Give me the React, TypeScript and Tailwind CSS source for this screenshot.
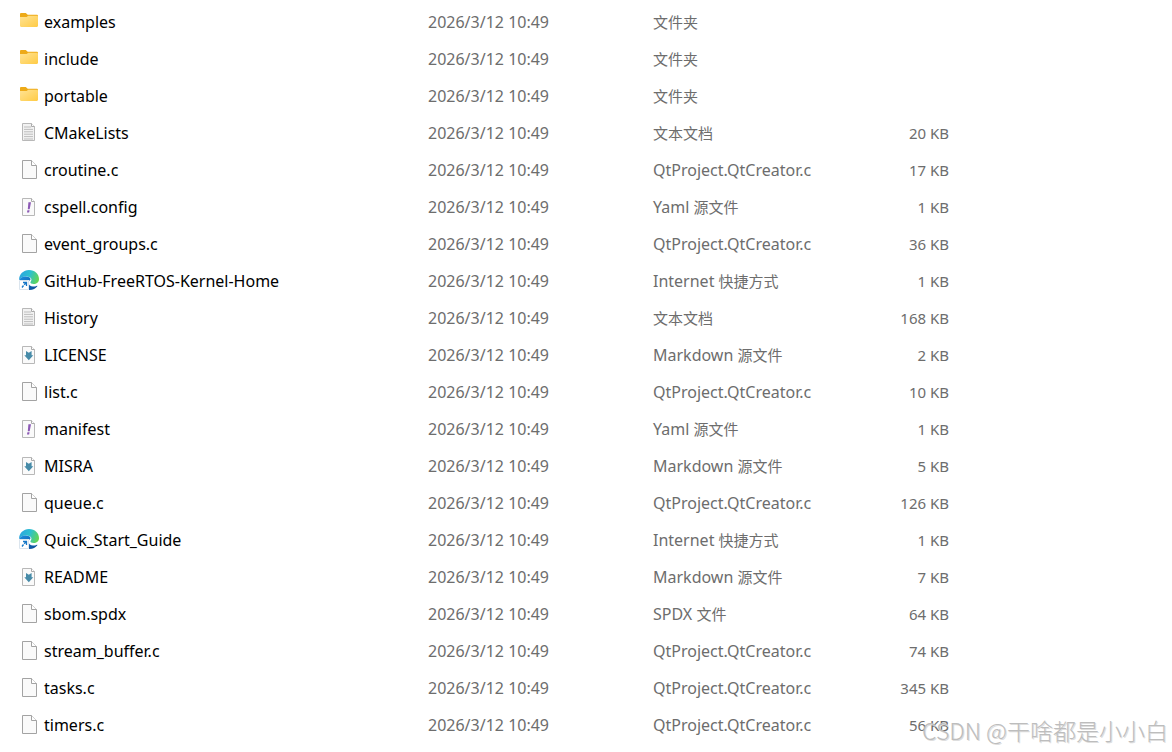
import React from 'react'

export default function App() {
  return (
    <main className="relative min-h-screen overflow-x-hidden bg-white pt-[3px] font-['Noto_Sans','Noto_Sans_CJK_SC',sans-serif]">
      <FileTable files={files} />
      <Watermark />
    </main>
  )
}

type FileKind = 'folder' | 'text' | 'c' | 'yaml' | 'link' | 'markdown' | 'spdx'

type FileItem = {
  name: string
  kind: FileKind
  size?: string
}

const MODIFIED = '2026/3/12 10:49'

const kindLabels: Record<FileKind, string[]> = {
  folder: ['', '文件夹'],
  text: ['', '文本文档'],
  c: ['QtProject.QtCreator.c'],
  yaml: ['Yaml', '源文件'],
  link: ['Internet', '快捷方式'],
  markdown: ['Markdown', '源文件'],
  spdx: ['SPDX', '文件'],
}

const files: FileItem[] = [
  { name: 'examples', kind: 'folder' },
  { name: 'include', kind: 'folder' },
  { name: 'portable', kind: 'folder' },
  { name: 'CMakeLists', kind: 'text', size: '20 KB' },
  { name: 'croutine.c', kind: 'c', size: '17 KB' },
  { name: 'cspell.config', kind: 'yaml', size: '1 KB' },
  { name: 'event_groups.c', kind: 'c', size: '36 KB' },
  { name: 'GitHub-FreeRTOS-Kernel-Home', kind: 'link', size: '1 KB' },
  { name: 'History', kind: 'text', size: '168 KB' },
  { name: 'LICENSE', kind: 'markdown', size: '2 KB' },
  { name: 'list.c', kind: 'c', size: '10 KB' },
  { name: 'manifest', kind: 'yaml', size: '1 KB' },
  { name: 'MISRA', kind: 'markdown', size: '5 KB' },
  { name: 'queue.c', kind: 'c', size: '126 KB' },
  { name: 'Quick_Start_Guide', kind: 'link', size: '1 KB' },
  { name: 'README', kind: 'markdown', size: '7 KB' },
  { name: 'sbom.spdx', kind: 'spdx', size: '64 KB' },
  { name: 'stream_buffer.c', kind: 'c', size: '74 KB' },
  { name: 'tasks.c', kind: 'c', size: '345 KB' },
  { name: 'timers.c', kind: 'c', size: '56 KB' },
]

function FileTable({ files }: { files: FileItem[] }) {
  return (
    <table className="w-full table-fixed border-collapse text-base leading-5 whitespace-nowrap text-[#6d6d6d]">
      <colgroup>
        <col className="w-[428px]" />
        <col className="w-[225px]" />
        <col className="w-[200px]" />
        <col className="w-24" />
        <col />
      </colgroup>
      <tbody>
        {files.map((file) => (
          <tr key={file.name} className="h-[37px]">
            <td className="p-0 pl-[19px] text-black">
              <div className="flex items-center gap-[5px]">
                <FileIcon kind={file.kind} />
                <span>{file.name}</span>
              </div>
            </td>
            <td className="p-0">{MODIFIED}</td>
            <td className="p-0">
              <KindLabel kind={file.kind} />
            </td>
            <td className="p-0 text-right text-[15px]">{file.size}</td>
            <td className="p-0" />
          </tr>
        ))}
      </tbody>
    </table>
  )
}

function KindLabel({ kind }: { kind: FileKind }) {
  const [latin, chinese] = kindLabels[kind]
  return (
    <>
      {latin}
      {latin && chinese && ' '}
      {chinese && (
        <span lang="zh-CN" className="text-[15px]">
          {chinese}
        </span>
      )}
    </>
  )
}

function FileIcon({ kind }: { kind: FileKind }) {
  return (
    <svg
      viewBox="0 0 20 20"
      className="mb-0.5 size-5 shrink-0"
      aria-hidden="true"
    >
      {kind === 'folder' && <FolderShape />}
      {kind === 'link' && <EdgeShape />}
      {(kind === 'c' || kind === 'spdx') && (
        <g stroke="#a3a3a3" strokeLinejoin="round">
          <path d="M3.5 1.5h9l5 5v13h-14z" fill="#fafafa" />
          <path d="M12.5 1.5v5h5" fill="#fff" />
        </g>
      )}
      {kind === 'text' && (
        <>
          <path d="M3.5 1.5h9l3 3v14h-12z" fill="#f2f2f2" stroke="#b8b8b8" />
          <path
            d="M5 5h7M5 7.4h9M5 9.8h9M5 12.2h9M5 14.6h9M5 17h9"
            stroke="#bdbdbd"
          />
          <path d="M12.5 1.5v3h3" fill="#fff" stroke="#ababab" />
        </>
      )}
      {(kind === 'yaml' || kind === 'markdown') && (
        <>
          <path d="M3.5 2.5h9l3 3v14h-12z" fill="#fafafa" stroke="#b8b8b8" />
          <path d="M12.5 2.5v3h3" fill="#fff" stroke="#ababab" />
        </>
      )}
      {kind === 'yaml' && (
        <path
          d="M9.4 6.3h2.6l-1.3 6.9H8.8zM8.4 14.2h2.2l-.5 2.2H8z"
          fill="#8c59b5"
        />
      )}
      {kind === 'markdown' && (
        <path
          d="M7 7l2.800 1.700L12.600 7v4.300h1.700l-4.500 4.900-4.500-4.900H7z"
          fill="#478ba8"
        />
      )}
    </svg>
  )
}

function FolderShape() {
  return (
    <>
      <defs>
        <linearGradient id="folder" x1="0" y1="0" x2="1" y2="1">
          <stop offset="0" stopColor="#ffe394" />
          <stop offset="1" stopColor="#ffcb45" />
        </linearGradient>
      </defs>
      <path
        d="M1 3.2C1 2.5 1.5 2 2.2 2h4.6l1.9 1.7h9c.7 0 1.3.5 1.3 1.2V8H1z"
        fill="#edaa18"
      />
      <path
        d="M1 6h6.7l1.5-1.2h8.6c.7 0 1.2.4 1.2 1.1v8.9c0 .7-.5 1.2-1.2 1.2H2.2c-.7 0-1.2-.5-1.2-1.2z"
        fill="url(#folder)"
      />
    </>
  )
}

// Edge swirl with the shortcut arrow in its corner
function EdgeShape() {
  return (
    <>
      <defs>
        <linearGradient id="edge-top" x1="0" y1="0.3" x2="1" y2="0.6">
          <stop offset="0" stopColor="#2ba5e0" />
          <stop offset="0.5" stopColor="#2cc0cf" />
          <stop offset="1" stopColor="#64d651" />
        </linearGradient>
        <linearGradient id="edge-low" x1="0" y1="0" x2="1" y2="1">
          <stop offset="0" stopColor="#1b8fe0" />
          <stop offset="1" stopColor="#0c4a94" />
        </linearGradient>
      </defs>
      <path
        d="M0 10C0 4.200 4.500 0 10 0c6 0 10 4.300 10 9 0 3.300-2.400 5-5.400 5-2.200 0-3.200-.8-3.200-1.500 0-.7 1-1.300 1-2.900C12.400 7.500 9.800 6.600 7 6.600c-3.500 0-6 1.400-7 3.400z"
        fill="url(#edge-top)"
      />
      <path
        d="M0 10.500C.6 7.800 3.500 6.600 6.500 6.600c3 0 5 .9 5.100 2.900-.9.600-1.900 1.600-1.900 3.500 0 2 1.800 3.400 4.300 3.600 1.500 0 2.700-.3 3.900-.9.500-.2.700.1.400.5C16.700 18.600 14 20 10.500 20 4.500 20 0 15.500 0 10.500z"
        fill="url(#edge-low)"
      />
      <path d="M0 10h10v10H0z" fill="#fff" />
      <path d="M.5 10.500h9v9h-9z" fill="#fff" stroke="#dbe5ee" />
      <path
        d="M4 12.500h3.500V16M7 13l-1.800 1.800M4.500 15.500L3 17.500"
        fill="none"
        stroke="#1677c7"
        strokeWidth="1.3"
      />
    </>
  )
}

function Watermark() {
  return (
    <p
      lang="zh-CN"
      className="pointer-events-none absolute right-1 bottom-1.5 font-['Noto_Sans_CJK_SC',sans-serif] text-[23px] leading-8 font-light whitespace-nowrap text-[#bdbdbd] [text-shadow:1px_1px_0_#dedede]"
    >
      CSDN @干啥都是小小白
    </p>
  )
}
